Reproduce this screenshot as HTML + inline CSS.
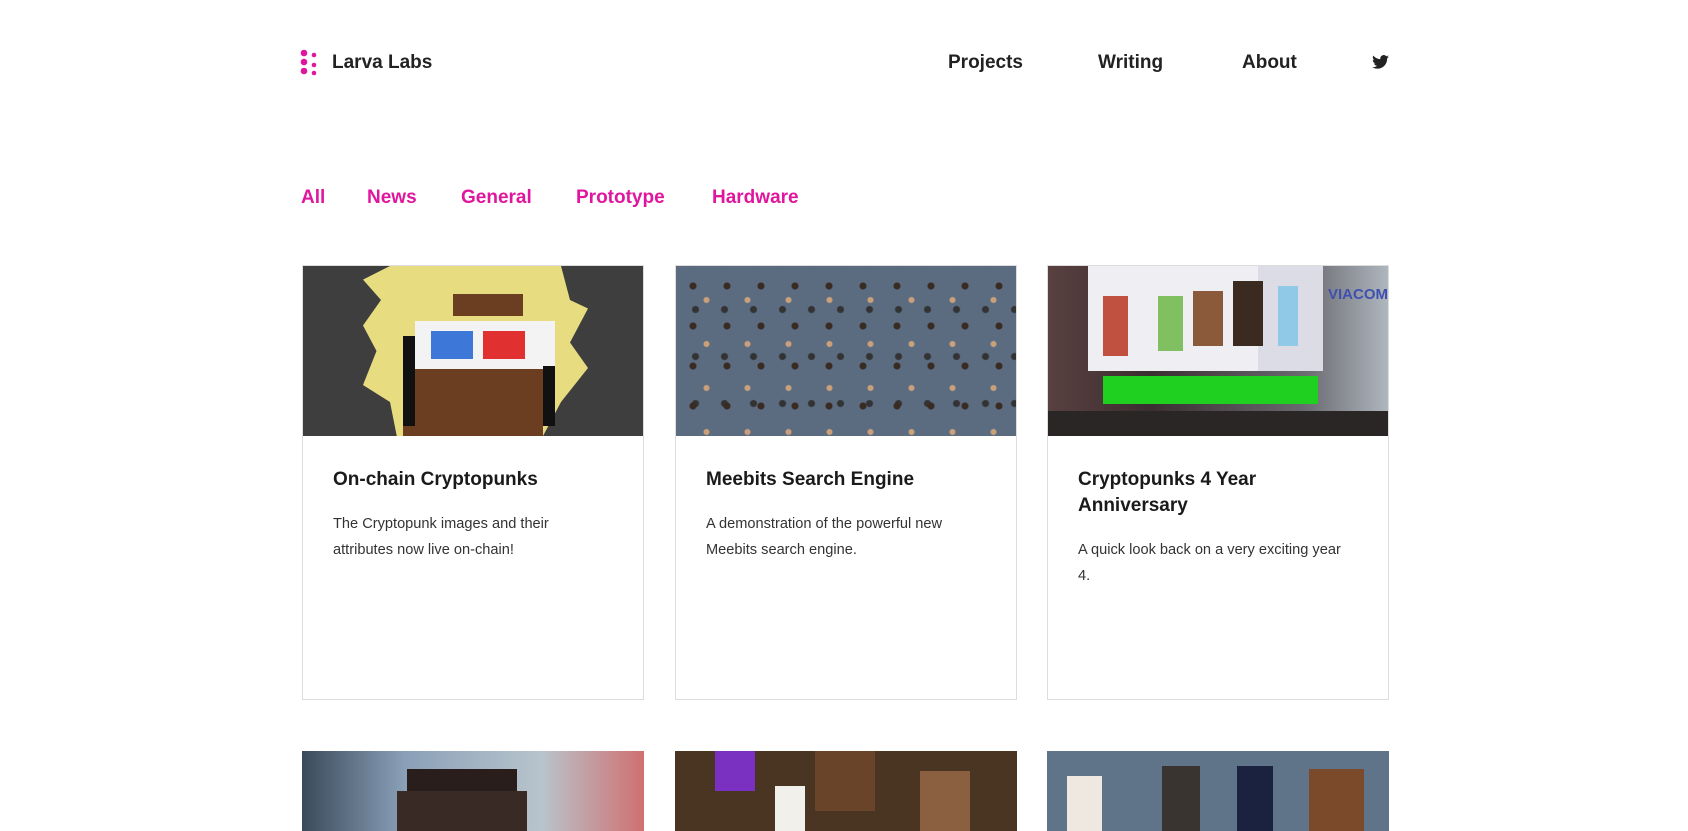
<!DOCTYPE html>
<html><head><meta charset="utf-8"><style>
*{margin:0;padding:0;box-sizing:border-box}
body{width:1688px;height:810px;overflow:hidden;background:#fff;font-family:"Liberation Sans",sans-serif;color:#1a1a1a;position:relative}
.a{position:absolute}
.nav{font-size:19px;font-weight:bold;top:52px;color:#222}
.f{font-size:19px;font-weight:bold;color:#e0179e;top:187px}
.card{position:absolute;top:265px;width:342px;height:435px;border:1px solid #ddd;background:#fff}
.img{height:170px;position:relative;overflow:hidden}
.t{position:absolute;left:30px;top:201px;font-size:19px;font-weight:bold;line-height:26px;width:290px;color:#1a1a1a}
.d{position:absolute;left:30px;font-size:14.6px;line-height:26px;color:#333;width:270px}
.card2{position:absolute;top:751px;width:342px;height:80px;overflow:hidden}
</style></head><body>
<svg class="a" style="left:300px;top:49px" width="20" height="28"><g fill="#e0179e"><circle cx="4" cy="4" r="3.3"/><circle cx="4" cy="13" r="3.3"/><circle cx="4" cy="22" r="3.3"/><circle cx="14" cy="6" r="2.3"/><circle cx="14" cy="16" r="2.3"/><circle cx="14" cy="24" r="2.3"/></g></svg>
<div class="a nav" style="left:332px">Larva Labs</div>
<div class="a nav" style="left:948px">Projects</div>
<div class="a nav" style="left:1098px">Writing</div>
<div class="a nav" style="left:1242px">About</div>
<svg class="a" style="left:1372px;top:55px" width="17" height="14" viewBox="0 0 24 20"><path fill="#222" d="M24 2.4a9.8 9.8 0 0 1-2.8.8A4.9 4.9 0 0 0 23.3.5a9.9 9.9 0 0 1-3.1 1.2A4.9 4.9 0 0 0 11.8 6 14 14 0 0 1 1.7.9a4.9 4.9 0 0 0 1.5 6.6A4.9 4.9 0 0 1 1 6.9a4.9 4.9 0 0 0 3.9 4.9 4.9 4.9 0 0 1-2.2.1 4.9 4.9 0 0 0 4.6 3.4A9.9 9.9 0 0 1 0 17.3 14 14 0 0 0 7.5 19.5c9.1 0 14-7.5 14-14v-.6A10 10 0 0 0 24 2.4z"/></svg>
<div class="a f" style="left:301px">All</div>
<div class="a f" style="left:367px">News</div>
<div class="a f" style="left:461px">General</div>
<div class="a f" style="left:576px">Prototype</div>
<div class="a f" style="left:712px">Hardware</div>

<div class="card" style="left:302px"><div class="img" style="background:#3e3e3e">
<div class="a" style="left:60px;top:0;width:225px;height:170px;background:#e8dc80;clip-path:polygon(12% 0,88% 0,92% 20%,100% 25%,92% 45%,100% 60%,88% 80%,80% 100%,15% 100%,12% 80%,0 70%,6% 50%,0 35%,8% 20%,0 8%)"></div>
<div class="a" style="left:100px;top:100px;width:140px;height:70px;background:#6b3e22"></div>
<div class="a" style="left:150px;top:28px;width:70px;height:22px;background:#6b3e22"></div>
<div class="a" style="left:112px;top:55px;width:140px;height:48px;background:#f3f3f3"></div>
<div class="a" style="left:128px;top:65px;width:42px;height:28px;background:#3d78d8"></div>
<div class="a" style="left:180px;top:65px;width:42px;height:28px;background:#e03030"></div>
<div class="a" style="left:100px;top:70px;width:12px;height:90px;background:#111"></div>
<div class="a" style="left:240px;top:100px;width:12px;height:60px;background:#111"></div>
</div>
<div class="t">On-chain Cryptopunks</div>
<div class="d" style="top:245px">The Cryptopunk images and their attributes now live on-chain!</div></div>

<div class="card" style="left:675px"><div class="img" style="background:#5b6b80;background-image:radial-gradient(circle,#3a2b22 3px,transparent 4px),radial-gradient(circle,#c9a07a 2.5px,transparent 3.5px),radial-gradient(circle,#333 3px,transparent 4px);background-size:34px 40px,41px 44px,29px 47px;background-position:0 0,10px 12px,5px 20px"></div>
<div class="t">Meebits Search Engine</div>
<div class="d" style="top:245px">A demonstration of the powerful new Meebits search engine.</div></div>

<div class="card" style="left:1047px"><div class="img" style="background:#4a3a3a">
<div class="a" style="left:0;top:0;width:342px;height:170px;background:linear-gradient(90deg,#5a4040,#3a2e30 30%,#6a6a70 75%,#b0b8c0)"></div>
<div class="a" style="left:40px;top:0;width:232px;height:105px;background:#efeef3"></div>
<div class="a" style="left:210px;top:0;width:65px;height:105px;background:#dcdce6"></div>
<div class="a" style="left:55px;top:110px;width:215px;height:28px;background:#20d020"></div>
<div class="a" style="left:55px;top:30px;width:25px;height:60px;background:#c05040"></div>
<div class="a" style="left:110px;top:30px;width:25px;height:55px;background:#80c060"></div>
<div class="a" style="left:145px;top:25px;width:30px;height:55px;background:#8a5a3a"></div>
<div class="a" style="left:185px;top:15px;width:30px;height:65px;background:#3a2a20"></div>
<div class="a" style="left:230px;top:20px;width:20px;height:60px;background:#90c8e8"></div>
<div class="a" style="left:280px;top:20px;width:62px;height:16px;color:#4050b0;font-weight:bold;font-size:15px">VIACOM</div>
<div class="a" style="left:0;top:145px;width:342px;height:25px;background:#2a2626"></div>
</div>
<div class="t">Cryptopunks 4 Year Anniversary</div>
<div class="d" style="top:271px">A quick look back on a very exciting year 4.</div></div>

<div class="card2" style="left:302px;background:linear-gradient(90deg,#3a4a5a,#8aa0b8 30%,#b8c4cc 70%,#d07070)"><div class="a" style="left:105px;top:18px;width:110px;height:70px;background:#2a1e1c"></div><div class="a" style="left:95px;top:40px;width:130px;height:40px;background:#3a2a26"></div></div>
<div class="card2" style="left:675px;background:#4a3422"><div class="a" style="left:40px;top:0;width:40px;height:40px;background:#7a30c0"></div><div class="a" style="left:140px;top:0;width:60px;height:60px;background:#6a4428"></div><div class="a" style="left:245px;top:20px;width:50px;height:60px;background:#8a6040"></div><div class="a" style="left:100px;top:35px;width:30px;height:45px;background:#f2f0ea"></div></div>
<div class="card2" style="left:1047px;background:#5f7389"><div class="a" style="left:20px;top:25px;width:35px;height:55px;background:#efe8e0"></div><div class="a" style="left:115px;top:15px;width:38px;height:65px;background:#3a3430"></div><div class="a" style="left:190px;top:15px;width:36px;height:65px;background:#1a2240"></div><div class="a" style="left:262px;top:18px;width:55px;height:62px;background:#7a4a2a"></div></div>
</body></html>
